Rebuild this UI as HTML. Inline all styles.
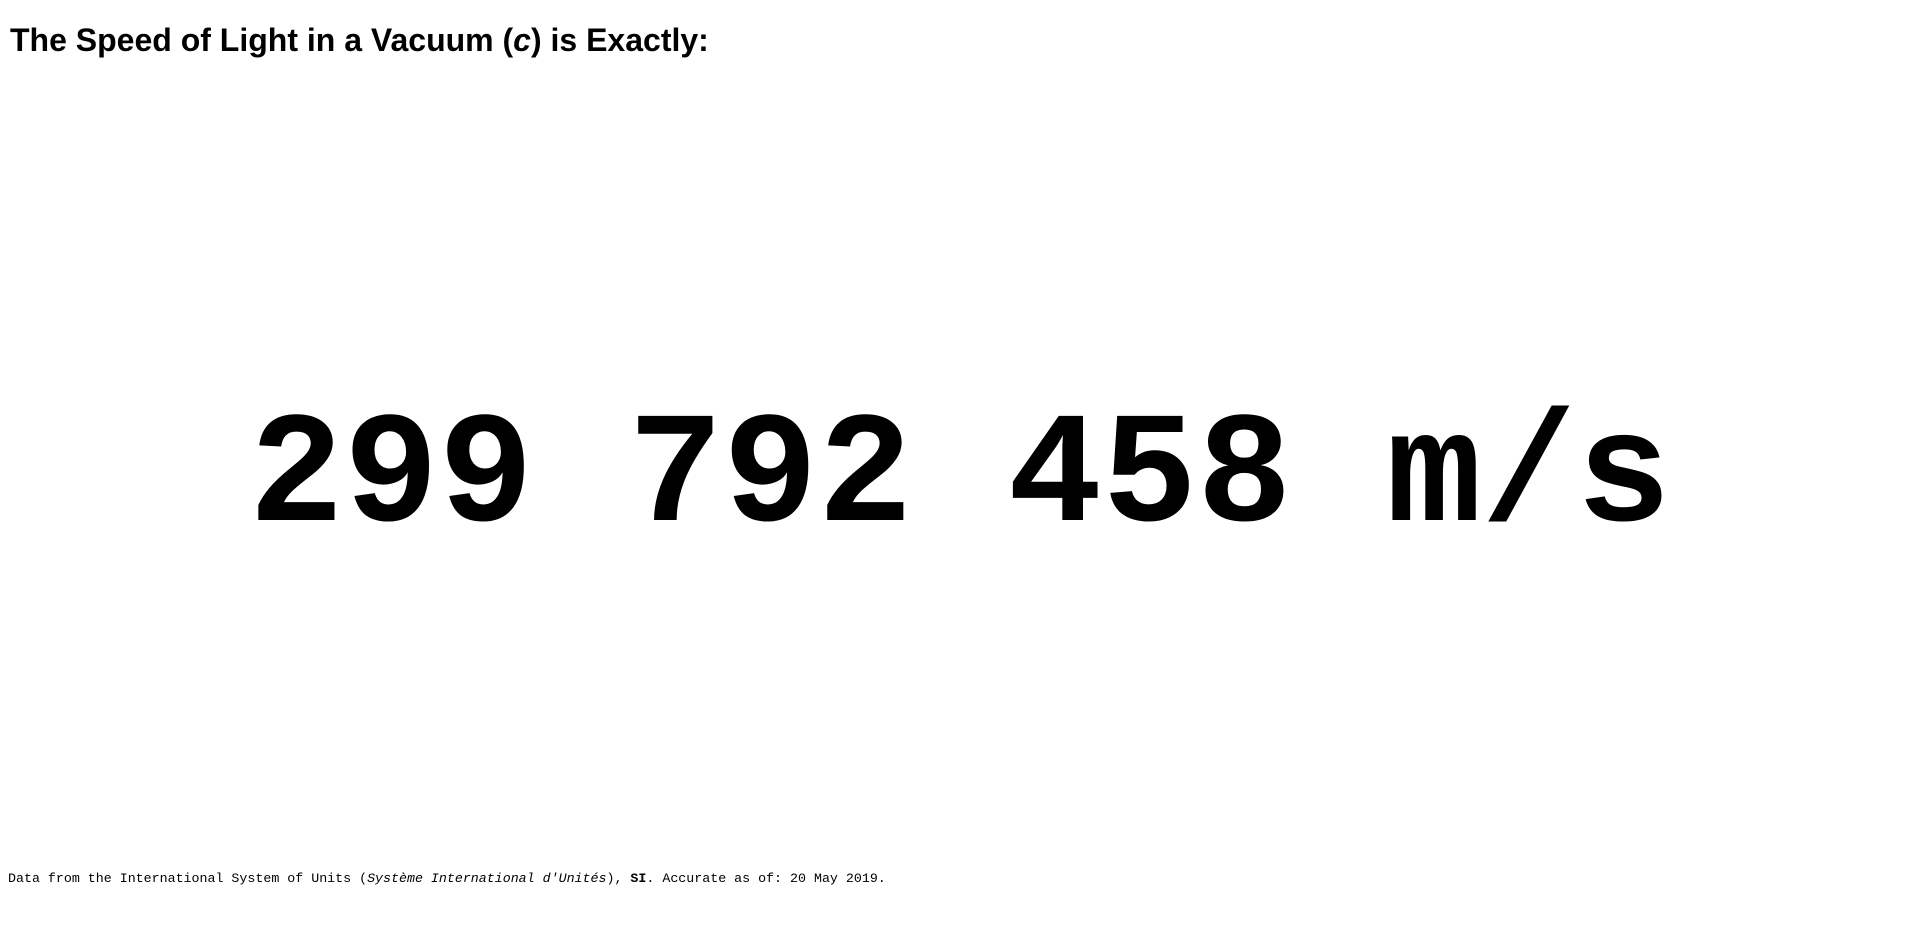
<!DOCTYPE html>
<html><head><meta charset="utf-8"><style>
html,body{margin:0;padding:0;width:1920px;height:929px;background:#fff;overflow:hidden;color:#000}
h1{position:absolute;left:10px;top:22px;margin:0;font:bold 32px "Liberation Sans",Arial,sans-serif;white-space:nowrap}
.num{position:absolute;left:0;width:1920px;top:400px;text-align:center;font:bold 158px/1 "Liberation Mono","Courier New",monospace;white-space:pre}
.foot{position:absolute;left:8px;top:871px;font:13.3px "Liberation Mono","Courier New",monospace;white-space:pre}
</style></head><body>
<h1>The Speed of Light in a Vacuum (<i>c</i>) is Exactly:</h1>
<div class="num">299 792 458 m/s</div>
<div class="foot">Data from the International System of Units (<i>Système International d'Unités</i>), <b>SI</b>. Accurate as of: 20 May 2019.</div>
</body></html>
